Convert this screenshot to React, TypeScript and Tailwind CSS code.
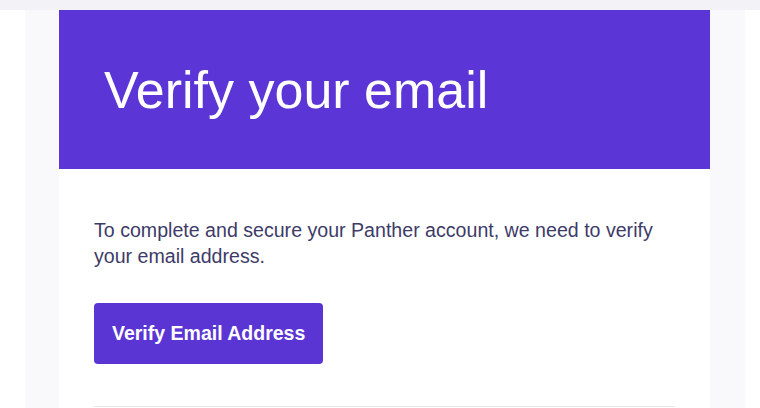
import React from 'react';

export default function App() {
  return (
    <div className="w-[760px] h-[408px] overflow-hidden bg-white font-['Liberation_Sans',Arial,sans-serif]">
      {/* top strip */}
      <div className="h-[10px] bg-[#f3f3f7]" />

      <div className="ml-[25px] w-[720px] h-[398px] bg-[#f9f9fc] px-[34px]">
        <div className="w-[651px] h-full bg-white">
          {/* header */}
          <div className="h-[159px] bg-[#5b35d5] flex items-center pl-[45px]">
            <h1 className="text-[52px] leading-[60px] text-white font-normal">Verify your email</h1>
          </div>

          {/* body */}
          <div className="px-[35px] pt-[48px]">
            <p className="text-[19.6px] leading-[26px] text-[#3d3b68]">
              To complete and secure your Panther account, we need to verify your email address.
            </p>
            <button className="mt-[34px] h-[61px] px-[18px] rounded-[4px] bg-[#5a35d4] text-white text-[19.5px] font-bold">
              Verify Email Address
            </button>
            <div className="mt-[42px] h-px bg-[#e6e6ee]" />
          </div>
        </div>
      </div>
    </div>
  );
}
